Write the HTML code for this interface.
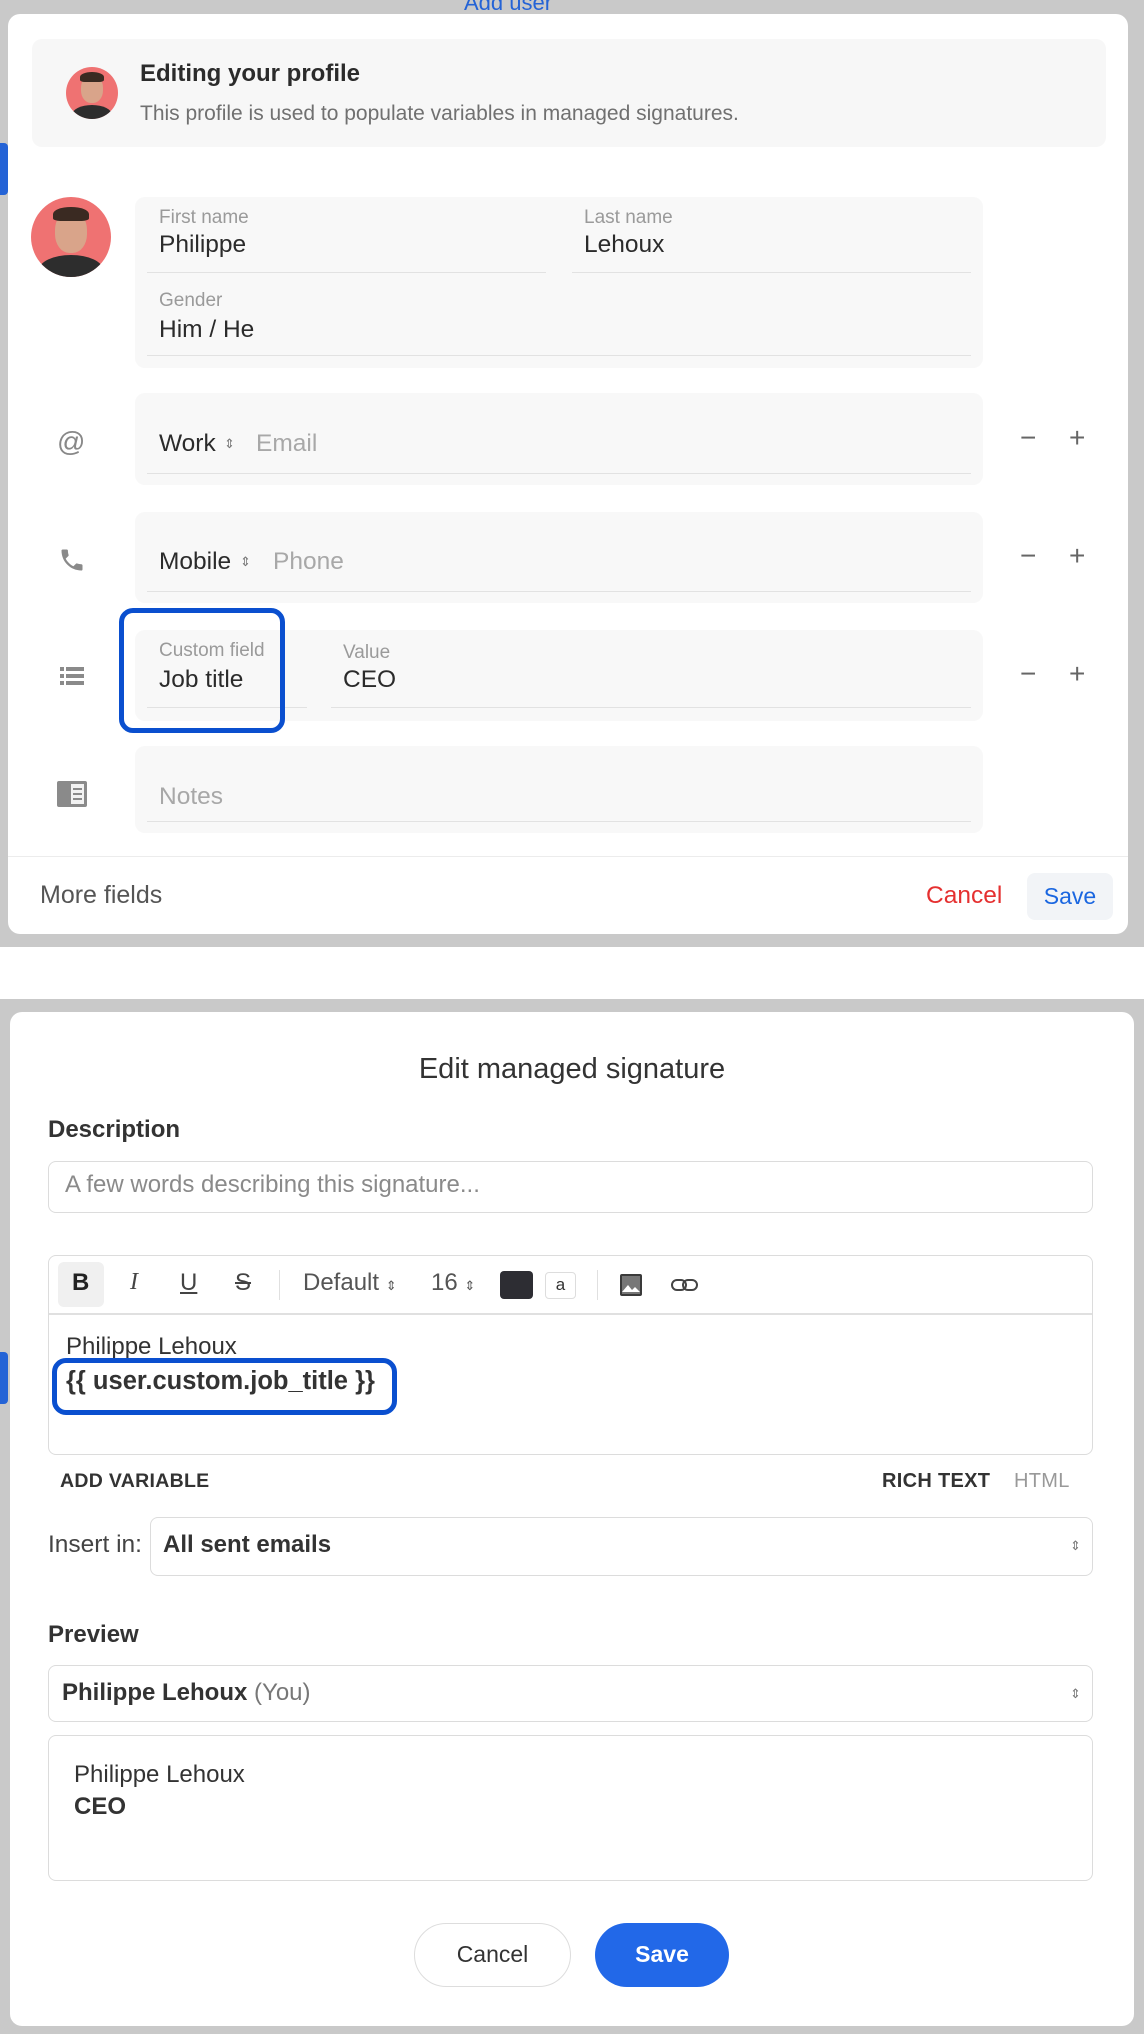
<!DOCTYPE html>
<html><head><meta charset="utf-8">
<style>
*{box-sizing:border-box;margin:0;padding:0}
body{width:1144px;height:2034px;position:relative;background:#fff;font-family:"Liberation Sans",sans-serif;color:#2b2b2b;overflow:hidden}
.a{position:absolute}
.bg1{left:0;top:0;width:1144px;height:947px;background:#c9c9c9}
.bg2{left:0;top:999px;width:1144px;height:1035px;background:#c9c9c9}
.modal{background:#fff;border-radius:12px}
.fbox{background:#f8f8f8;border-radius:10px}
.ul{height:1px;background:#e2e2e2}
.lbl{font-size:19px;color:#9a9a9a}
.val{font-size:24.5px;color:#2b2b2b}
.ph{font-size:24.5px;color:#a8a8a8}
.mp{font-size:28px;color:#666;font-weight:300}
.inp{border:1.5px solid #dcdcdc;border-radius:8px;background:#fff}
.tb{font-size:24px;color:#444;top:1269px}
.hl{border:5px solid #0a4fcf;border-radius:14px}
</style></head><body>
<div class="a bg1"></div>
<div class="a" style="left:464px;top:-10px;font-size:22px;color:#2463d6">Add user</div>
<div class="a" style="left:0;top:143px;width:8px;height:52px;background:#2463d6;border-radius:0 4px 4px 0"></div>
<div class="a modal" style="left:8px;top:14px;width:1120px;height:920px"></div>
<div class="a" style="left:32px;top:39px;width:1074px;height:108px;background:#f7f7f7;border-radius:10px"></div>
<div class="a" style="left:66px;top:67px;width:52px;height:52px;border-radius:50%;background:#ef7272;overflow:hidden"><div style="position:absolute;left:15px;top:8px;width:22px;height:28px;border-radius:45%;background:#d9a48a"></div><div style="position:absolute;left:14px;top:5px;width:24px;height:10px;border-radius:50% 50% 20% 20%;background:#3a2a22"></div><div style="position:absolute;left:6px;top:38px;width:40px;height:20px;border-radius:50% 50% 0 0;background:#2d2d2d"></div></div>
<div class="a" style="left:140px;top:60px;font-size:24px;font-weight:bold;color:#2b2b2b">Editing your profile</div>
<div class="a" style="left:140px;top:102px;font-size:21px;color:#707070">This profile is used to populate variables in managed signatures.</div>

<div class="a" style="left:31px;top:197px;width:80px;height:80px;border-radius:50%;background:#ef7272;overflow:hidden"><div style="position:absolute;left:24px;top:14px;width:32px;height:42px;border-radius:45%;background:#d9a48a"></div><div style="position:absolute;left:22px;top:10px;width:36px;height:14px;border-radius:50% 50% 20% 20%;background:#3a2a22"></div><div style="position:absolute;left:8px;top:58px;width:64px;height:30px;border-radius:50% 50% 0 0;background:#2d2d2d"></div></div>

<div class="a fbox" style="left:135px;top:197px;width:848px;height:171px"></div>
<div class="a lbl" style="left:159px;top:207px">First name</div>
<div class="a val" style="left:159px;top:231px">Philippe</div>
<div class="a ul" style="left:147px;top:272px;width:399px"></div>
<div class="a lbl" style="left:584px;top:207px">Last name</div>
<div class="a val" style="left:584px;top:231px">Lehoux</div>
<div class="a ul" style="left:572px;top:272px;width:399px"></div>
<div class="a lbl" style="left:159px;top:290px">Gender</div>
<div class="a val" style="left:159px;top:316px">Him / He</div>
<div class="a ul" style="left:147px;top:355px;width:824px"></div>

<div class="a" style="left:57px;top:426px;font-size:28px;color:#888">@</div>
<div class="a fbox" style="left:135px;top:393px;width:848px;height:92px"></div>
<div class="a val" style="left:159px;top:430px">Work</div>
<div class="a" style="left:224px;top:436px;font-size:13px;color:#777">⇕</div>
<div class="a ph" style="left:256px;top:430px">Email</div>
<div class="a ul" style="left:147px;top:473px;width:824px"></div>
<div class="a mp" style="left:1020px;top:422px">−</div>
<div class="a mp" style="left:1069px;top:422px">+</div>

<svg class="a" style="left:58px;top:546px" width="28" height="28" viewBox="0 0 24 24"><path d="M6.6 10.8c1.4 2.8 3.8 5.1 6.6 6.6l2.2-2.2c.3-.3.7-.4 1-.2 1.1.4 2.3.6 3.6.6.6 0 1 .4 1 1V20c0 .6-.4 1-1 1C10.6 21 3 13.4 3 4c0-.6.4-1 1-1h3.5c.6 0 1 .4 1 1 0 1.3.2 2.5.6 3.6.1.3 0 .7-.2 1L6.6 10.8z" fill="#8a8a8a"/></svg>
<div class="a fbox" style="left:135px;top:512px;width:848px;height:91px"></div>
<div class="a val" style="left:159px;top:548px">Mobile</div>
<div class="a" style="left:240px;top:554px;font-size:13px;color:#777">⇕</div>
<div class="a ph" style="left:273px;top:548px">Phone</div>
<div class="a ul" style="left:147px;top:591px;width:824px"></div>
<div class="a mp" style="left:1020px;top:540px">−</div>
<div class="a mp" style="left:1069px;top:540px">+</div>

<svg class="a" style="left:60px;top:666px" width="24" height="20" viewBox="0 0 24 20"><rect x="0" y="1" width="4" height="4" fill="#8a8a8a"/><rect x="6" y="1" width="18" height="4" fill="#8a8a8a"/><rect x="0" y="8" width="4" height="4" fill="#8a8a8a"/><rect x="6" y="8" width="18" height="4" fill="#8a8a8a"/><rect x="0" y="15" width="4" height="4" fill="#8a8a8a"/><rect x="6" y="15" width="18" height="4" fill="#8a8a8a"/></svg>
<div class="a fbox" style="left:135px;top:630px;width:848px;height:91px"></div>
<div class="a lbl" style="left:159px;top:640px">Custom field</div>
<div class="a val" style="left:159px;top:666px">Job title</div>
<div class="a ul" style="left:147px;top:707px;width:160px"></div>
<div class="a lbl" style="left:343px;top:642px">Value</div>
<div class="a val" style="left:343px;top:666px">CEO</div>
<div class="a ul" style="left:331px;top:707px;width:640px"></div>
<div class="a mp" style="left:1020px;top:658px">−</div>
<div class="a mp" style="left:1069px;top:658px">+</div>
<div class="a hl" style="left:119px;top:608px;width:166px;height:125px"></div>

<svg class="a" style="left:57px;top:781px" width="30" height="26" viewBox="0 0 30 26"><rect x="0" y="0" width="30" height="26" rx="2" fill="#8a8a8a"/><rect x="14" y="3" width="13" height="20" fill="#f2f2f2"/><rect x="16" y="7" width="9" height="2" fill="#8a8a8a"/><rect x="16" y="12" width="9" height="2" fill="#8a8a8a"/><rect x="16" y="17" width="9" height="2" fill="#8a8a8a"/></svg>
<div class="a fbox" style="left:135px;top:746px;width:848px;height:87px"></div>
<div class="a ph" style="left:159px;top:783px">Notes</div>
<div class="a ul" style="left:147px;top:821px;width:824px"></div>

<div class="a" style="left:8px;top:856px;width:1120px;height:1px;background:#ececec"></div>
<div class="a" style="left:40px;top:881px;font-size:25px;color:#555">More fields</div>
<div class="a" style="left:926px;top:882px;font-size:24.5px;color:#e53030">Cancel</div>
<div class="a" style="left:1027px;top:873px;width:86px;height:47px;background:#f2f4f7;border-radius:8px;font-size:23px;color:#1a66e0;text-align:center;line-height:47px">Save</div>

<div class="a bg2"></div>
<div class="a" style="left:0;top:1352px;width:8px;height:52px;background:#2463d6;border-radius:0 4px 4px 0"></div>
<div class="a modal" style="left:10px;top:1012px;width:1124px;height:1014px"></div>
<div class="a" style="left:10px;top:1053px;width:1124px;text-align:center;font-size:29px;color:#333">Edit managed signature</div>
<div class="a" style="left:48px;top:1116px;font-size:24px;font-weight:bold;color:#333">Description</div>
<div class="a inp" style="left:48px;top:1161px;width:1045px;height:52px"></div>
<div class="a" style="left:65px;top:1171px;font-size:24px;color:#8a8a8a">A few words describing this signature...</div>

<div class="a inp" style="left:48px;top:1255px;width:1045px;height:200px"></div>
<div class="a" style="left:49px;top:1313px;width:1043px;height:1.5px;background:#e0e0e0"></div>
<div class="a" style="left:58px;top:1262px;width:46px;height:45px;background:#f0f0f0;border-radius:6px"></div>
<div class="a tb" style="left:72px;font-weight:bold;color:#222">B</div>
<div class="a tb" style="left:130px;font-style:italic;font-family:'Liberation Serif',serif;font-size:24px">I</div>
<div class="a tb" style="left:180px;text-decoration:underline">U</div>
<div class="a tb" style="left:235px;text-decoration:line-through">S</div>
<div class="a" style="left:279px;top:1270px;width:1px;height:30px;background:#e0e0e0"></div>
<div class="a tb" style="left:303px;color:#555">Default <span style="font-size:13px">⇕</span></div>
<div class="a tb" style="left:431px;color:#555">16 <span style="font-size:13px">⇕</span></div>
<div class="a" style="left:500px;top:1271px;width:33px;height:28px;background:#2d2d33;border-radius:4px"></div>
<div class="a" style="left:545px;top:1272px;width:31px;height:27px;border:1.5px solid #ddd;border-radius:4px;font-size:17px;text-align:center;line-height:24px;color:#333">a</div>
<div class="a" style="left:597px;top:1270px;width:1px;height:30px;background:#e0e0e0"></div>
<svg class="a" style="left:620px;top:1274px" width="22" height="22" viewBox="0 0 22 22"><rect x="0" y="0" width="22" height="22" rx="2" fill="#3a3a3a"/><rect x="2" y="2" width="18" height="18" fill="#777"/><path d="M2 18l6-7 4 5 3-3 5 5z" fill="#fff"/></svg>
<svg class="a" style="left:671px;top:1278px" width="28" height="14" viewBox="0 0 28 14"><rect x="1" y="2" width="14" height="10" rx="5" fill="none" stroke="#444" stroke-width="2"/><rect x="12" y="2" width="14" height="10" rx="5" fill="none" stroke="#444" stroke-width="2"/></svg>
<div class="a" style="left:66px;top:1333px;font-size:24px;color:#333">Philippe Lehoux</div>
<div class="a" style="left:66px;top:1367px;font-size:25.5px;font-weight:bold;color:#333">{{ user.custom.job_title }}</div>
<div class="a hl" style="left:52px;top:1358px;width:345px;height:57px"></div>

<div class="a" style="left:60px;top:1470px;font-size:19.5px;font-weight:bold;color:#333;letter-spacing:0.3px">ADD VARIABLE</div>
<div class="a" style="left:882px;top:1470px;font-size:20px;font-weight:bold;color:#333;letter-spacing:0.3px">RICH TEXT</div>
<div class="a" style="left:1014px;top:1470px;font-size:20px;color:#999;letter-spacing:0.3px">HTML</div>

<div class="a" style="left:48px;top:1531px;font-size:24.5px;color:#444">Insert in:</div>
<div class="a inp" style="left:150px;top:1517px;width:943px;height:59px"></div>
<div class="a" style="left:163px;top:1531px;font-size:24px;font-weight:bold;color:#333">All sent emails</div>
<div class="a" style="left:1070px;top:1538px;font-size:13px;color:#777">⇕</div>

<div class="a" style="left:48px;top:1621px;font-size:24px;font-weight:bold;color:#333">Preview</div>
<div class="a inp" style="left:48px;top:1665px;width:1045px;height:57px"></div>
<div class="a" style="left:62px;top:1679px;font-size:24px;color:#333"><b>Philippe Lehoux</b> <span style="color:#777">(You)</span></div>
<div class="a" style="left:1070px;top:1686px;font-size:13px;color:#777">⇕</div>
<div class="a inp" style="left:48px;top:1735px;width:1045px;height:146px"></div>
<div class="a" style="left:74px;top:1761px;font-size:24px;color:#333">Philippe Lehoux</div>
<div class="a" style="left:74px;top:1793px;font-size:24px;font-weight:bold;color:#333">CEO</div>

<div class="a" style="left:414px;top:1923px;width:157px;height:64px;border:1.5px solid #ddd;border-radius:32px;text-align:center;line-height:61px;font-size:23px;color:#333;background:#fff">Cancel</div>
<div class="a" style="left:595px;top:1923px;width:134px;height:64px;border-radius:32px;text-align:center;line-height:62px;font-size:23px;color:#fff;background:#2268e8;font-weight:bold">Save</div>
</body></html>
